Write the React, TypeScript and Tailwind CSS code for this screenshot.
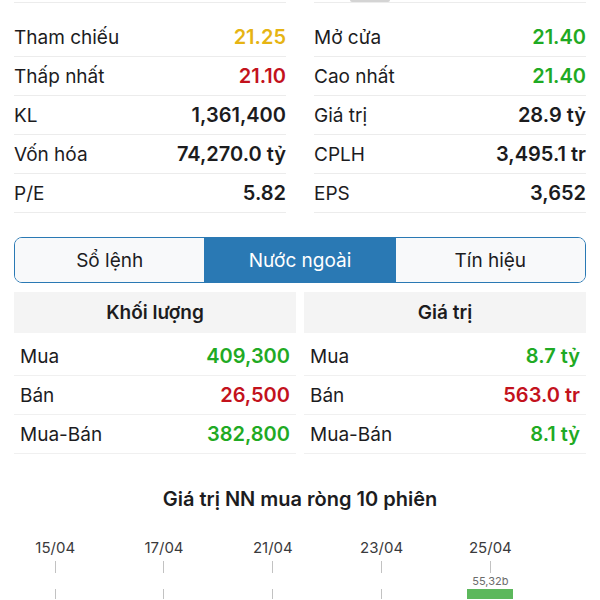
import React from 'react';

type Stat = { label: string; value: string; tone?: 'ref' | 'up' | 'down' };

const leftStats: Stat[] = [
  { label: 'Tham chiếu', value: '21.25', tone: 'ref' },
  { label: 'Thấp nhất', value: '21.10', tone: 'down' },
  { label: 'KL', value: '1,361,400' },
  { label: 'Vốn hóa', value: '74,270.0 tỷ' },
  { label: 'P/E', value: '5.82' },
];

const rightStats: Stat[] = [
  { label: 'Mở cửa', value: '21.40', tone: 'up' },
  { label: 'Cao nhất', value: '21.40', tone: 'up' },
  { label: 'Giá trị', value: '28.9 tỷ' },
  { label: 'CPLH', value: '3,495.1 tr' },
  { label: 'EPS', value: '3,652' },
];

const volumeRows: Stat[] = [
  { label: 'Mua', value: '409,300', tone: 'up' },
  { label: 'Bán', value: '26,500', tone: 'down' },
  { label: 'Mua-Bán', value: '382,800', tone: 'up' },
];

const valueRows: Stat[] = [
  { label: 'Mua', value: '8.7 tỷ', tone: 'up' },
  { label: 'Bán', value: '563.0 tr', tone: 'down' },
  { label: 'Mua-Bán', value: '8.1 tỷ', tone: 'up' },
];

const sessions = ['15/04', '', '17/04', '', '21/04', '', '23/04', '', '25/04', ''];

function toneClass(tone?: Stat['tone']) {
  if (tone === 'ref') return 'text-[#e6b413]';
  if (tone === 'up') return 'text-[#1faa24]';
  if (tone === 'down') return 'text-[#c3121c]';
  return 'text-[#1c1c1e]';
}

function StatColumn({ rows }: { rows: Stat[] }) {
  return (
    <div className="flex flex-col">
      <div className="h-[16px] border-t border-[#ececec]" />
      {rows.map((r) => (
        <div key={r.label} className="h-[39px] flex items-center justify-between border-b border-[#ececec]">
          <span className="text-[#1c1c1e]">{r.label}</span>
          <span className={`text-[20px] font-semibold ${toneClass(r.tone)}`}>{r.value}</span>
        </div>
      ))}
    </div>
  );
}

function ForeignTable({ title, rows }: { title: string; rows: Stat[] }) {
  return (
    <div className="flex flex-col">
      <div className="h-[41px] bg-[#f4f4f4] flex items-center justify-center font-semibold text-[#1c1c1e]">
        {title}
      </div>
      <div className="h-[4px]" />
      {rows.map((r) => (
        <div key={r.label} className="h-[39px] flex items-center justify-between px-[6px] border-b border-[#f0f0f0]">
          <span className="text-[#1c1c1e]">{r.label}</span>
          <span className={`text-[20px] font-semibold ${toneClass(r.tone)}`}>{r.value}</span>
        </div>
      ))}
    </div>
  );
}

export default function App() {
  const tabs = ['Sổ lệnh', 'Nước ngoài', 'Tín hiệu'];
  const active = 1;

  return (
    <div className="w-[600px] h-[600px] overflow-hidden bg-white font-['Inter','Noto_Sans',sans-serif] text-[19px] leading-none">
      {/* handle peeking from the panel above */}
      <div className="h-[2px] flex">
        <div className="ml-[350px] w-[40px] h-[2px] rounded-b bg-[#d4d4d4]" />
      </div>

      {/* Price summary */}
      <div className="grid grid-cols-2 gap-x-[28px] px-[14px]">
        <StatColumn rows={leftStats} />
        <StatColumn rows={rightStats} />
      </div>

      {/* Tabs */}
      <div className="mx-[14px] mt-[24px] h-[46px] flex rounded-[8px] border-[1.5px] border-[#2a79b4] overflow-hidden">
        {tabs.map((t, i) => (
          <div
            key={t}
            className={`flex-1 flex items-center justify-center ${
              i === active ? 'bg-[#2a79b4] text-white' : 'bg-[#f8f9fa] text-[#1c1c1e]'
            } ${i === 1 ? 'border-x-[1.5px] border-[#2a79b4]' : ''}`}
          >
            {t}
          </div>
        ))}
      </div>

      {/* Foreign trading */}
      <div className="grid grid-cols-2 gap-x-[8px] px-[14px] mt-[9px]">
        <ForeignTable title="Khối lượng" rows={volumeRows} />
        <ForeignTable title="Giá trị" rows={valueRows} />
      </div>

      {/* Chart */}
      <div className="mt-[32px] text-center font-semibold text-[20px] leading-[26px] text-[#1c1c1e]">
        Giá trị NN mua ròng 10 phiên
      </div>
      <div className="mt-[27px] w-[544px] mx-auto grid grid-cols-10">
        {sessions.map((d, i) => (
          <div key={i} className="flex flex-col items-center">
            <div className="h-[18px] text-[15px] leading-[18px] text-[#3a3a3c] whitespace-nowrap">{d}</div>
            <div className={`mt-[4px] h-[12px] w-px ${d ? 'bg-[#c2c2c2]' : ''}`} />
            <div className="h-[16px] flex items-center text-[11px] text-[#6b6b6b]">{i === 8 ? '55,32b' : ''}</div>
            {i === 8 ? (
              <div className="h-[10px] w-[46px] bg-[#5cb85c]" />
            ) : (
              <div className={`h-[10px] w-px ${d ? 'bg-[#c2c2c2]' : ''}`} />
            )}
          </div>
        ))}
      </div>
    </div>
  );
}
